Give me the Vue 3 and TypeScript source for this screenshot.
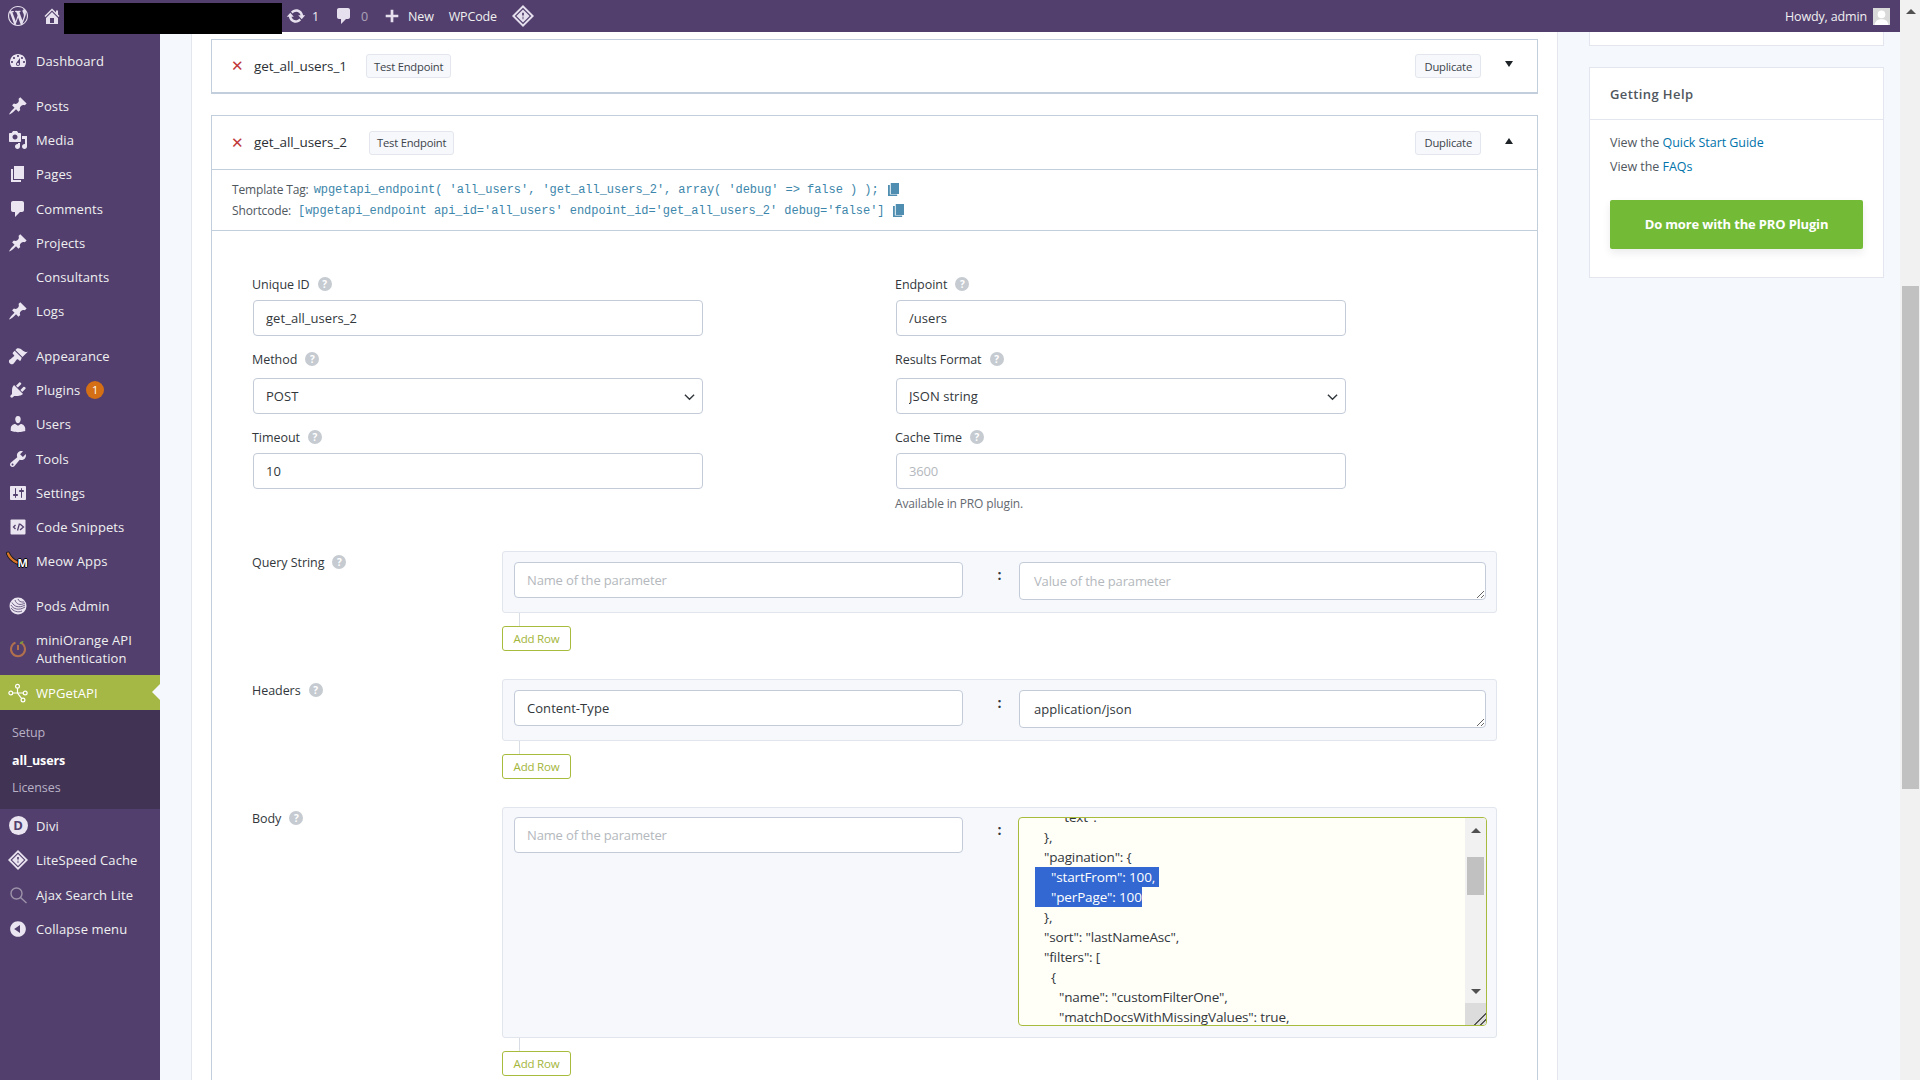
<template>
  <div class="page">
    <div class="window">
      <header class="adminbar">
        <svg class="bar-logo" viewBox="0 0 20 20"><path :d="icons.wp" /></svg>
        <svg class="bar-home" viewBox="0 0 20 20"><path :d="icons.home" /></svg>
        <div class="redacted"></div>
        <svg class="bar-update" viewBox="0 0 20 20"><path :d="icons.update" /></svg>
        <span class="count">1</span>
        <svg class="bar-comment" viewBox="0 0 20 20"><path :d="icons.comment" /></svg>
        <span class="count dim">0</span>
        <svg class="bar-plus" viewBox="0 0 20 20"><path d="M17 8.500v3h-5.500V17h-3v-5.500H3v-3h5.500V3h3v5.500z" /></svg>
        <span class="bar-new">New</span>
        <span class="bar-wpcode">WPCode</span>
        <svg class="bar-diamond" viewBox="0 0 20 20">
          <path d="M10 0l10 10-10 10L0 10z" />
          <path class="cut" d="M10 2.500l7.500 7.500-7.500 7.500L2.500 10z" />
          <path d="M10 4l6 6-6 6-6-6z" />
          <path class="cut" d="M9.200 7h1.600v2.500h-1.600zM9.600 10.500h.8v2.500h-.8z" />
        </svg>
        <span class="howdy">Howdy, admin</span>
        <span class="avatar">
          <svg viewBox="0 0 16 16"><circle cx="8" cy="6" r="3.600" /><path d="M1.500 16c.4-4 3-5.500 6.500-5.500s6.100 1.500 6.500 5.500z" /></svg>
        </span>
      </header>

      <div class="body-row">
        <nav class="sidebar">
          <template v-for="item in menu" :key="item.label">
            <div class="menu-item" :class="{ current: item.current, sep: item.sep, tall: item.tall }">
              <span class="menu-icon">
                <svg v-if="item.path" viewBox="0 0 20 20"><path :d="item.path" fill-rule="evenodd" /></svg>
                <svg v-else-if="item.kind === 'code'" viewBox="0 0 20 20">
                  <rect x="2.500" y="2.500" width="15" height="15" rx="1" />
                  <path class="dark-line" d="M7.500 8l-2 2 2 2M9.500 13.500l2-7M12 7l3.500 3-3.500 3" />
                </svg>
                <span v-else-if="item.kind === 'meow'" class="meow">
                  <svg viewBox="0 0 14 16">
                    <path class="tail-back" d="M2 2.500c1.500 4 4 6.500 9 9" />
                    <path class="tail" d="M2 2.500c1.500 4 4 6.500 9 9" />
                  </svg>
                  <b>M</b>
                </span>
                <svg v-else-if="item.kind === 'pods'" viewBox="0 0 20 20">
                  <circle cx="10" cy="10" r="8.500" />
                  <path class="dark-thin" d="M3 9c2 4 8 6 14 2M4 6.500c2 4 7 6 13 2.500M7 4c1 4 5 6 10 3M10 3c.5 2 3 3.500 6 3M3 12c2 3 7 5 11 3" />
                </svg>
                <svg v-else-if="item.kind === 'orange'" viewBox="0 0 20 20">
                  <path class="orange-ring" d="M12.500 3.600a7 7 0 1 1-5 0M10 6v5" />
                  <path class="orange-leaf" d="M11.500 5c.5-2 2-3 4-3-.2 2-1.800 3.300-4 3z" />
                </svg>
                <svg v-else-if="item.kind === 'nodes'" viewBox="0 0 20 20">
                  <g class="node-lines">
                    <circle cx="2.800" cy="10" r="1.900" /><circle cx="9.500" cy="3.300" r="1.900" />
                    <circle cx="17.200" cy="10" r="1.900" /><circle cx="15" cy="17" r="1.900" />
                    <path d="M4.700 10h10.600M9.500 5.200V10l4.200 5.600" />
                  </g>
                </svg>
                <span v-else-if="item.kind === 'divi'" class="divi">D</span>
                <svg v-else-if="item.kind === 'lite'" viewBox="0 0 20 20">
                  <path d="M10 0l10 10-10 10L0 10z" />
                  <path class="cut" d="M10 2.500l7.500 7.500-7.500 7.500L2.500 10z" />
                  <path d="M10 4l6 6-6 6-6-6z" />
                  <path class="cut" d="M9.200 7h1.600v2.500h-1.600zM9.600 10.500h.8v2.500h-.8z" />
                </svg>
                <svg v-else-if="item.kind === 'search'" viewBox="0 0 20 20">
                  <circle class="search-line" cx="8.500" cy="8.500" r="5.500" />
                  <path class="search-line" d="M12.500 12.500l6 5.500" />
                </svg>
              </span>
              <span class="menu-label">{{ item.label }}</span>
              <span v-if="item.badge" class="badge">{{ item.badge }}</span>
            </div>
            <div v-if="item.current" class="submenu">
              <div>Setup</div>
              <div class="active">all_users</div>
              <div>Licenses</div>
            </div>
          </template>
        </nav>

        <main class="content">
          <section class="panel">
            <div class="card closed">
              <div class="card-head">
                <span class="remove">✕</span>
                <span class="name">get_all_users_1</span>
                <button type="button" class="small-btn">Test Endpoint</button>
                <button type="button" class="small-btn dup">Duplicate</button>
                <span class="caret"></span>
              </div>
            </div>

            <div class="card">
              <div class="card-head open">
                <span class="remove">✕</span>
                <span class="name">get_all_users_2</span>
                <button type="button" class="small-btn">Test Endpoint</button>
                <button type="button" class="small-btn dup">Duplicate</button>
                <span class="caret up"></span>
              </div>

              <div class="info">
                <div class="info-line">
                  <span class="info-label">Template Tag:</span>
                  <code>wpgetapi_endpoint( 'all_users', 'get_all_users_2', array( 'debug' =&gt; false ) );</code>
                  <svg class="copy" viewBox="0 0 12 14"><path d="M3 0h9v12H3zM0 2h2v10.500h8V14H0z" /></svg>
                </div>
                <div class="info-line">
                  <span class="info-label">Shortcode:</span>
                  <code>[wpgetapi_endpoint api_id='all_users' endpoint_id='get_all_users_2' debug='false']</code>
                  <svg class="copy" viewBox="0 0 12 14"><path d="M3 0h9v12H3zM0 2h2v10.500h8V14H0z" /></svg>
                </div>
              </div>

              <div class="form">
                <div class="fields">
                  <div class="field">
                    <label>Unique ID <i class="help">?</i></label>
                    <input type="text" value="get_all_users_2" />
                  </div>
                  <div class="field">
                    <label>Endpoint <i class="help">?</i></label>
                    <input type="text" value="/users" />
                  </div>
                  <div class="field">
                    <label>Method <i class="help">?</i></label>
                    <div class="select-wrap">
                      <select><option>POST</option></select>
                      <svg viewBox="0 0 12 8"><path d="M1 1.500l5 5 5-5" /></svg>
                    </div>
                  </div>
                  <div class="field">
                    <label>Results Format <i class="help">?</i></label>
                    <div class="select-wrap">
                      <select><option>JSON string</option></select>
                      <svg viewBox="0 0 12 8"><path d="M1 1.500l5 5 5-5" /></svg>
                    </div>
                  </div>
                  <div class="field">
                    <label>Timeout <i class="help">?</i></label>
                    <input type="text" value="10" />
                  </div>
                  <div class="field">
                    <label>Cache Time <i class="help">?</i></label>
                    <input type="text" placeholder="3600" disabled />
                    <p class="hint">Available in PRO plugin.</p>
                  </div>
                </div>

                <div class="param">
                  <label>Query String <i class="help">?</i></label>
                  <div>
                    <div class="param-box">
                      <input type="text" placeholder="Name of the parameter" />
                      <b class="colon">:</b>
                      <textarea placeholder="Value of the parameter"></textarea>
                    </div>
                    <div class="stem"></div>
                    <button type="button" class="add-row">Add Row</button>
                  </div>
                </div>

                <div class="param">
                  <label>Headers <i class="help">?</i></label>
                  <div>
                    <div class="param-box">
                      <input type="text" value="Content-Type" />
                      <b class="colon">:</b>
                      <textarea>application/json</textarea>
                    </div>
                    <div class="stem"></div>
                    <button type="button" class="add-row">Add Row</button>
                  </div>
                </div>

                <div class="param">
                  <label>Body <i class="help">?</i></label>
                  <div>
                    <div class="param-box body-box">
                      <input type="text" placeholder="Name of the parameter" />
                      <b class="colon">:</b>
                      <div class="json">
                        <div class="json-text">
                          <div
                            v-for="(line, i) in jsonLines"
                            :key="i"
                            class="json-line"
                            :class="line.cls"
                          >
                            <span>{{ line.text }}</span>
                          </div>
                        </div>
                        <div class="json-scroll">
                          <span class="arrow up"></span>
                          <span class="thumb"></span>
                          <span class="arrow down"></span>
                          <span class="grip"></span>
                        </div>
                      </div>
                    </div>
                    <div class="stem"></div>
                    <button type="button" class="add-row">Add Row</button>
                  </div>
                </div>
              </div>
            </div>
          </section>

          <aside class="side">
            <div class="side-stub"></div>
            <div class="side-box">
              <h3>Getting Help</h3>
              <div class="side-body">
                <p>View the <a href="#">Quick Start Guide</a></p>
                <p>View the <a href="#">FAQs</a></p>
                <a href="#" class="pro-btn">Do more with the PRO Plugin</a>
              </div>
            </div>
          </aside>
        </main>
      </div>
    </div>

    <div class="page-scroll">
      <span class="arrow up"></span>
      <span class="page-thumb"></span>
    </div>
  </div>
</template>

<script setup lang="ts">
interface MenuItem {
  label: string
  path?: string
  kind?: string
  sep?: boolean
  tall?: boolean
  current?: boolean
  badge?: string
}

const pin =
  'M10.44 3.02l1.82-1.82 6.36 6.35-1.83 1.82c-1.05-.68-2.48-.57-3.41.36l-.75.75c-.92.93-1.04 2.35-.35 3.41l-1.83 1.82-2.41-2.41-2.8 2.79c-.42.42-3.38 2.71-3.8 2.29s1.86-3.39 2.28-3.81l2.79-2.79L4.1 9.36l1.83-1.82c1.05.69 2.48.57 3.4-.36l.75-.75c.93-.92 1.05-2.35.36-3.41z'

const icons = {
  wp: 'M20 10c0-5.51-4.49-10-10-10C4.48 0 0 4.49 0 10c0 5.52 4.48 10 10 10 5.51 0 10-4.48 10-10zM7.78 15.37L4.37 6.22c.55-.02 1.17-.08 1.17-.08.5-.06.44-1.13-.06-1.11 0 0-1.45.11-2.37.11-.18 0-.37 0-.58-.01C4.12 2.69 6.87 1.11 10 1.11c2.33 0 4.45.87 6.05 2.34-.68-.11-1.65.39-1.65 1.58 0 .74.45 1.36.9 2.1.35.61.55 1.36.55 2.46 0 1.49-1.4 5-1.4 5l-3.03-8.37c.54-.02.82-.17.82-.17.5-.05.44-1.25-.06-1.22 0 0-1.44.12-2.38.12-.87 0-2.33-.12-2.33-.12-.5-.03-.56 1.2-.06 1.22l.92.08 1.26 3.41zM17.41 10c.24-.64.74-1.87.43-4.25.7 1.29 1.05 2.71 1.05 4.25 0 3.29-1.73 6.24-4.4 7.78.97-2.59 1.94-5.2 2.92-7.78zM6.1 18.09C3.12 16.65 1.11 13.53 1.11 10c0-1.3.23-2.48.72-3.59C3.25 10.3 4.67 14.2 6.1 18.09zm4.03-6.63l2.58 6.98c-.86.29-1.76.45-2.71.45-.79 0-1.57-.11-2.29-.33.81-2.38 1.62-4.74 2.42-7.1z',
  home: 'M16 8.500l1.530 1.530-1.060 1.060L10 4.620l-6.470 6.470-1.060-1.060L10 2.500l4 4v-2h2v4zm-6-2.460l6 5.990V18H4v-5.970zM12 17v-5H8v5h4z',
  update:
    'M10.200 3.280c3.530 0 6.430 2.610 6.920 6h2.080l-3.500 4-3.500-4h2.320c-.45-1.970-2.210-3.450-4.320-3.450-1.450 0-2.730.71-3.540 1.780L4.950 5.660C6.230 4.200 8.110 3.280 10.200 3.280zm-.4 13.440c-3.520 0-6.430-2.610-6.920-6H.8l3.500-4c1.170 1.330 2.330 2.670 3.500 4H5.480c.45 1.970 2.210 3.450 4.320 3.450 1.450 0 2.730-.71 3.540-1.780l1.710 1.950c-1.280 1.460-3.150 2.380-5.250 2.380z',
  comment: 'M5 2h9c1.100 0 2 .9 2 2v7c0 1.100-.9 2-2 2h-2l-5 5v-5H5c-1.100 0-2-.9-2-2V4c0-1.100.9-2 2-2z',
}

const menu: MenuItem[] = [
  {
    label: 'Dashboard',
    path: 'M3.760 16h12.480c1.100-1.370 1.760-3.110 1.760-5 0-4.420-3.580-8-8-8s-8 3.580-8 8c0 1.890.66 3.630 1.760 5zM10 4c.55 0 1 .45 1 1s-.45 1-1 1-1-.45-1-1 .45-1 1-1zM6 6c.55 0 1 .45 1 1s-.45 1-1 1-1-.45-1-1 .45-1 1-1zm8 0c.55 0 1 .45 1 1s-.45 1-1 1-1-.45-1-1 .45-1 1-1zm-5.370 5.550L12 7v6c0 1.100-.9 2-2 2s-2-.9-2-2c0-.57.24-1.080.63-1.450zM4 10c.55 0 1 .45 1 1s-.45 1-1 1-1-.45-1-1 .45-1 1-1zm12 0c.55 0 1 .45 1 1s-.45 1-1 1-1-.45-1-1 .45-1 1-1zm-5 3c0-.55-.45-1-1-1s-1 .45-1 1 .45 1 1 1 1-.45 1-1z',
  },
  { label: 'Posts', path: pin, sep: true },
  {
    label: 'Media',
    path: 'M13 11V4c0-.55-.45-1-1-1h-1.670L9 1H5L3.670 3H2c-.55 0-1 .45-1 1v7c0 .55.45 1 1 1h10c.55 0 1-.45 1-1zM7 4.500c1.380 0 2.500 1.120 2.500 2.500S8.380 9.500 7 9.500 4.500 8.380 4.500 7 5.620 4.500 7 4.500zM14 6h5v10.500c0 1.380-1.120 2.500-2.500 2.500S14 17.880 14 16.500s1.120-2.500 2.500-2.500c.17 0 .34.02.5.05V9h-3V6zm-4 8.050V13h2v3.500c0 1.380-1.120 2.500-2.500 2.500S7 17.880 7 16.500 8.120 14 9.500 14c.17 0 .34.02.5.05z',
  },
  { label: 'Pages', path: 'M6 15V2h10v13H6zm-1 1h8v2H3V5h2v11z' },
  { label: 'Comments', path: icons.comment },
  { label: 'Projects', path: pin },
  { label: 'Consultants', kind: 'none' },
  { label: 'Logs', path: pin },
  {
    label: 'Appearance',
    sep: true,
    path: 'M14.480 11.060L7.410 3.990l1.500-1.500c.5-.56 2.300-.47 3.510.32 1.210.8 1.430 1.280 2.910 2.100 1.180.64 2.450 1.260 4.450.85zm-.71.71L6.700 4.700 4.930 6.470c-.39.39-.39 1.020 0 1.410l1.060 1.060c.39.39.39 1.030 0 1.420-.6.6-1.430 1.110-2.210 1.690-.35.26-.7.53-1.010.84C1.430 13.230.76 14.370 1 16.100c.14.97 1.060 1.890 2.030 2.030 1.730.24 2.870-.43 3.230-1.470.31-.31.58-.66.84-1.010.58-.78 1.090-1.610 1.690-2.210.39-.39 1.030-.39 1.420 0l1.060 1.060c.39.39 1.020.39 1.410 0z',
  },
  {
    label: 'Plugins',
    badge: '1',
    path: 'M13.110 4.360L9.870 7.600 8 5.730l3.240-3.240c.35-.34 1.050-.2 1.560.32.52.51.66 1.210.31 1.550zm-8 1.770l.91-1.120 9.010 9.010-1.190.84c-.71.71-2.630 1.160-3.820 1.160H6.140L4.900 17.260c-.59.59-1.540.59-2.120 0-.59-.58-.59-1.530 0-2.120l1.240-1.240v-3.880c0-1.130.4-3.190 1.090-3.890zm7.260 3.970l3.240-3.240c.34-.35 1.040-.21 1.550.31.52.51.66 1.210.31 1.550l-3.240 3.250z',
  },
  {
    label: 'Users',
    path: 'M10 9.250c-2.270 0-2.730-3.440-2.730-3.440C7 4.020 7.820 2 9.970 2c2.160 0 2.980 2.020 2.710 3.810 0 0-.41 3.440-2.680 3.440zm0 2.570L12.720 10c2.390 0 4.520 2.330 4.520 4.530v2.490s-3.650 1.130-7.240 1.130c-3.650 0-7.240-1.130-7.240-1.130v-2.490c0-2.250 1.940-4.480 4.470-4.480z',
  },
  {
    label: 'Tools',
    path: 'M16.680 9.770c-1.340 1.340-3.300 1.670-4.950.99l-5.410 6.520c-.99.99-2.590.99-3.580 0s-.99-2.590 0-3.570l6.520-5.420c-.68-1.650-.35-3.610.99-4.950 1.280-1.280 3.120-1.620 4.720-1.060l-2.890 2.890 2.820 2.820 2.860-2.870c.53 1.580.18 3.390-1.080 4.650zM3.810 16.210c.4.39 1.040.39 1.430 0 .4-.4.4-1.040 0-1.430-.39-.4-1.030-.4-1.430 0-.39.39-.39 1.030 0 1.430z',
  },
  {
    label: 'Settings',
    path: 'M18 16V4c0-.55-.45-1-1-1H3c-.55 0-1 .45-1 1v12c0 .55.45 1 1 1h14c.55 0 1-.45 1-1zM8 11h1c.55 0 1 .45 1 1s-.45 1-1 1H8v1.500c0 .28-.22.5-.5.5s-.5-.22-.5-.5V13H6c-.55 0-1-.45-1-1s.45-1 1-1h1V5.500c0-.28.22-.5.5-.5s.5.22.5.5V11zm5-2h-1c-.55 0-1-.45-1-1s.45-1 1-1h1V5.500c0-.28.22-.5.5-.5s.5.22.5.5V7h1c.55 0 1 .45 1 1s-.45 1-1 1h-1v5.500c0 .28-.22.5-.5.5s-.5-.22-.5-.5V9z',
  },
  { label: 'Code Snippets', kind: 'code' },
  { label: 'Meow Apps', kind: 'meow' },
  { label: 'Pods Admin', kind: 'pods', sep: true },
  { label: 'miniOrange API Authentication', kind: 'orange', tall: true },
  { label: 'WPGetAPI', kind: 'nodes', current: true },
  { label: 'Divi', kind: 'divi' },
  { label: 'LiteSpeed Cache', kind: 'lite' },
  { label: 'Ajax Search Lite', kind: 'search' },
  {
    label: 'Collapse menu',
    path: 'M10 2.160c4.330 0 7.840 3.510 7.840 7.840s-3.510 7.840-7.840 7.840S2.160 14.330 2.160 10 5.710 2.160 10 2.160zm2 11.720V6.120L6.180 9.970z',
  },
]

const jsonLines = [
  { text: '"text":', cls: 'i3' },
  { text: '},', cls: 'i1' },
  { text: '"pagination": {', cls: 'i1' },
  { text: '"startFrom": 100,', cls: 'sel first' },
  { text: '"perPage": 100', cls: 'sel' },
  { text: '},', cls: 'i1' },
  { text: '"sort": "lastNameAsc",', cls: 'i1' },
  { text: '"filters": [', cls: 'i1' },
  { text: '{', cls: 'i2' },
  { text: '"name": "customFilterOne",', cls: 'i3' },
  { text: '"matchDocsWithMissingValues": true,', cls: 'i3' },
]
</script>

<style>
html,
body {
  margin: 0;
  overflow: hidden;
}
</style>

<style scoped>
.page {
  display: flex;
  width: 1920px;
  height: 1080px;
  overflow: hidden;
  font-family: "Open Sans", "Noto Sans", sans-serif;
  font-size: 12.5px;
  letter-spacing: -0.15px;
  color: #32373c;
  background: #f5f8fc;
}
.window {
  display: flex;
  flex-direction: column;
  width: 1900px;
  flex: none;
}
.page-scroll {
  flex: 1;
  display: flex;
  flex-direction: column;
  align-items: center;
  background: #f1f1f1;
  padding: 9px 2px 0;
}
.page-thumb {
  width: 17px;
  height: 503px;
  margin-top: 272px;
  background: #c1c1c1;
}
.arrow {
  display: block;
  width: 0;
  height: 0;
  border-left: 5px solid transparent;
  border-right: 5px solid transparent;
}
.arrow.up {
  border-bottom: 5px solid #505050;
}
.arrow.down {
  border-top: 5px solid #505050;
}

/* top bar */
.adminbar {
  position: relative;
  z-index: 2;
  display: flex;
  align-items: center;
  flex: none;
  height: 32px;
  background: #523f6d;
  color: #f0f0f1;
  font-size: 12.5px;
}
.adminbar svg {
  flex: none;
  fill: #e6e0ee;
}
.bar-logo {
  width: 20px;
  height: 20px;
  margin-left: 8px;
}
.bar-home {
  width: 20px;
  height: 20px;
  margin-left: 14px;
}
.redacted {
  flex: none;
  align-self: flex-start;
  width: 218px;
  height: 31px;
  margin: 3px 0 0 2px;
  background: #000;
}
.bar-update {
  width: 20px;
  height: 20px;
  margin-left: 4px;
}
.count {
  margin-left: 6px;
  width: 9px;
}
.count.dim {
  opacity: 0.55;
}
.bar-comment {
  width: 20px;
  height: 20px;
  margin-left: 13px;
}
.bar-comment + .count {
  margin-left: 7px;
}
.bar-plus {
  width: 18px;
  height: 18px;
  margin-left: 13px;
}
.bar-new {
  margin-left: 7px;
}
.bar-wpcode {
  margin-left: 15px;
}
.bar-diamond {
  width: 22px;
  height: 22px;
  margin-left: 15px;
}
.adminbar .cut {
  fill: #523f6d;
}
.howdy {
  margin-left: auto;
}
.avatar {
  display: flex;
  width: 17px;
  height: 17px;
  margin: 0 10px 0 6px;
  background: #d9d9d9;
}
.adminbar .avatar svg {
  width: 100%;
  height: 100%;
  fill: #fff;
}

.body-row {
  display: flex;
  flex: 1;
  min-height: 0;
}

/* left menu */
.sidebar {
  flex: none;
  width: 160px;
  padding-top: 12px;
  background: #523f6d;
  color: #f0f0f1;
  font-size: 13px;
  letter-spacing: 0.1px;
}
.menu-item {
  position: relative;
  display: flex;
  align-items: center;
  height: 34.200px;
}
.menu-item.sep {
  margin-top: 10.700px;
}
.menu-item.tall {
  height: 52px;
  line-height: 18px;
}
.menu-item.current {
  height: 35px;
  background: #a5b745;
  color: #fff;
}
.menu-item.current::after {
  content: "";
  position: absolute;
  right: 0;
  top: 9px;
  border: 8px solid transparent;
  border-right-color: #f5f8fc;
  border-left-width: 0;
}
.menu-icon {
  display: flex;
  justify-content: center;
  flex: none;
  width: 20px;
  height: 20px;
  margin: 0 8px;
}
.menu-icon svg {
  width: 20px;
  height: 20px;
  fill: #eae5f1;
}
.menu-icon .cut {
  fill: #523f6d;
}
.dark-line {
  fill: none;
  stroke: #523f6d;
  stroke-width: 1.300;
}
.dark-thin {
  fill: none;
  stroke: #523f6d;
  stroke-width: 0.8;
}
.orange-ring {
  fill: none;
  stroke: #b0704e;
  stroke-width: 2;
}
.menu-icon .orange-leaf {
  fill: #7d9a3b;
}
.menu-icon .node-lines {
  fill: none;
  stroke: #fff;
  stroke-width: 1.200;
}
.menu-icon .search-line {
  fill: none;
  stroke: #9c93aa;
  stroke-width: 1.400;
}
.meow {
  position: relative;
  display: block;
  width: 20px;
  height: 20px;
}
.menu-icon .meow svg {
  position: absolute;
  left: -2px;
  top: 0;
  width: 14px;
  height: 16px;
}
.tail-back {
  fill: none;
  stroke: #1a1a1a;
  stroke-width: 4;
  stroke-linecap: round;
}
.tail {
  fill: none;
  stroke: #d9762a;
  stroke-width: 2.200;
  stroke-linecap: round;
}
.meow b {
  position: absolute;
  right: 0;
  top: 5px;
  font-size: 11px;
  line-height: 14px;
  color: #fff;
  text-shadow: 1px 0 #000, -1px 0 #000, 0 1px #000, 0 -1px #000;
}
.divi {
  display: block;
  width: 19px;
  height: 19px;
  border-radius: 50%;
  background: #eae5f1;
  color: #523f6d;
  font-weight: 700;
  font-size: 13px;
  line-height: 19px;
  text-align: center;
}
.badge {
  width: 18px;
  height: 18px;
  margin-left: 6px;
  border-radius: 50%;
  background: #d46f15;
  color: #fff;
  font-size: 11px;
  line-height: 18px;
  text-align: center;
}
.submenu {
  height: 99px;
  padding: 9px 12px 0;
  box-sizing: border-box;
  background: #413354;
  color: #b9b1c6;
  font-size: 12.500px;
  letter-spacing: -0.1px;
  line-height: 27.500px;
}
.submenu .active {
  color: #fff;
  font-weight: 700;
}

/* content */
.content {
  display: flex;
  flex: 1;
  min-width: 0;
  padding-left: 31px;
  overflow: hidden;
}
.panel {
  flex: none;
  width: 1367px;
  box-sizing: border-box;
  padding: 7px 19px 0 19px;
  background: #fff;
  border-left: 1px solid #e3e6ec;
  border-right: 1px solid #e3e6ec;
}
.card {
  border: 1px solid #c3cedd;
  margin-bottom: 21px;
}
.card.closed {
  height: 55px;
  box-sizing: border-box;
  border-bottom-width: 2px;
}
.card-head {
  display: flex;
  align-items: center;
  height: 52px;
  padding-left: 20px;
}
.card-head.open {
  height: 53px;
  border-bottom: 1px solid #c3cedd;
}
.remove {
  width: 22px;
  color: #c0393b;
  font-size: 15px;
  font-weight: 700;
  font-family: "DejaVu Sans", sans-serif;
  margin-left: -1px;
  margin-right: 1px;
}
.name {
  width: 112px;
  font-size: 13.500px;
  letter-spacing: -0.05px;
  color: #2c3035;
}
.card-head.open .name {
  width: 115px;
  margin-top: -2px;
}
.small-btn {
  height: 24px;
  padding: 0 7px;
  border: 1px solid #e3e6ec;
  border-radius: 3px;
  background: #f6f8fc;
  color: #3c434a;
  font: inherit;
  font-size: 11.200px;
  letter-spacing: -0.2px;
}
.small-btn.dup {
  margin-left: auto;
  padding: 0 8px;
}
.caret {
  width: 0;
  height: 0;
  margin: 0 24px 4px 24px;
  border-left: 4px solid transparent;
  border-right: 4px solid transparent;
  border-top: 6px solid #1d2327;
}
.caret.up {
  border-top: 0;
  border-bottom: 6px solid #1d2327;
}
.info {
  height: 61px;
  box-sizing: border-box;
  padding: 9px 20px 0;
  border-bottom: 1px solid #c3cedd;
  font-size: 12px;
  color: #50575e;
}
.info-line {
  display: flex;
  align-items: center;
  height: 21px;
}
.info-label {
  margin-right: 5px;
}
.info-line:last-child .info-label {
  margin-right: 7px;
}
code {
  font-family: "Liberation Mono", monospace;
  font-size: 12px;
  letter-spacing: -0.05px;
  color: #3d86ab;
}
.copy {
  width: 11px;
  height: 13px;
  margin-left: 9px;
  fill: #4f8eb0;
}

/* form */
.form {
  padding: 44px 41px 60px 40px;
}
.fields {
  display: grid;
  grid-template-columns: 643px 1fr;
  row-gap: 14px;
}
.field {
  display: flex;
  flex-direction: column;
  gap: 5px;
  align-items: flex-start;
}
.field label {
  margin: -1px 0 1px;
}
label {
  display: flex;
  align-items: center;
  gap: 7px;
  height: 20px;
  font-size: 12.500px;
  letter-spacing: -0.05px;
  color: #32373c;
}
.help {
  width: 14px;
  height: 14px;
  margin-left: 1px;
  border-radius: 50%;
  background: #c6cbd1;
  color: #fff;
  font: 700 10px/14px "Open Sans", sans-serif;
  text-align: center;
}
input,
select,
textarea {
  box-sizing: border-box;
  margin: 0 1px;
  padding: 0 12px;
  background: #fff;
  border: 1px solid #c3cad8;
  border-radius: 4px;
  color: #32373c;
  font: inherit;
  font-size: 13px;
  letter-spacing: 0.05px;
  outline: none;
}
.fields input,
.fields select {
  width: 450px;
  height: 36px;
}
input::placeholder,
textarea::placeholder {
  color: #b4b8bd;
  letter-spacing: -0.15px;
}
input:disabled {
  background: #fff;
}
.select-wrap {
  position: relative;
  margin-top: 3px;
  height: 36px;
}
select {
  appearance: none;
  display: block;
}
.select-wrap svg {
  position: absolute;
  right: 9px;
  top: 15px;
  width: 11px;
  height: 8px;
  fill: none;
  stroke: #32373c;
  stroke-width: 1.500;
}
.hint {
  margin: 2px 0 0;
  font-size: 12px;
  line-height: 16px;
  color: #646970;
}
.param {
  display: grid;
  grid-template-columns: 250px 995px;
  margin-top: 28px;
}
.fields + .param {
  margin-top: 39px;
}
.param > label {
  margin-top: 1px;
}
.param-box {
  display: flex;
  box-sizing: border-box;
  height: 62px;
  padding: 10px 10px 0 11px;
  background: #f6f8fc;
  border: 1px solid #e1e5ec;
  border-radius: 3px;
}
.param-box input {
  flex: none;
  width: 449px;
  height: 36px;
  margin: 0;
}
.colon {
  flex: none;
  width: 56px;
  box-sizing: border-box;
  padding-left: 17px;
  margin-top: 4px;
  font-size: 14px;
  line-height: 18px;
  text-align: center;
}
.param-box textarea {
  flex: none;
  width: 467px;
  height: 38px;
  margin: 0;
  padding: 8px 14px;
  line-height: 20px;
}
.stem {
  width: 1px;
  height: 13px;
  margin-left: 17px;
  background: #d8dce3;
}
.add-row {
  display: block;
  width: 69px;
  height: 25px;
  padding: 0;
  background: #fff;
  border: 1px solid #a9bb3d;
  border-radius: 3px;
  color: #a3b53a;
  font: inherit;
  font-size: 11.500px;
  letter-spacing: -0.2px;
}
.body-box {
  height: 231px;
  padding-top: 9px;
}
.json {
  position: relative;
  flex: none;
  box-sizing: border-box;
  width: 469px;
  height: 209px;
  margin-left: -1px;
  overflow: hidden;
  background: #fffef7;
  border: 1px solid #a9bb3d;
  border-radius: 4px;
  font-size: 13.500px;
  line-height: 20px;
  color: #32373c;
}
.json-text {
  margin-top: -11px;
  padding-left: 16px;
}
.json-line {
  height: 20px;
  white-space: nowrap;
}
.i1 {
  padding-left: 9px;
}
.i2 {
  padding-left: 16px;
}
.i3 {
  padding-left: 24px;
}
.sel span {
  display: inline-block;
  padding-left: 16px;
  background: #3367d1;
  color: #fff;
}
.sel.first span {
  padding-right: 4px;
}
.json-scroll {
  position: absolute;
  top: 0;
  right: 0;
  bottom: 0;
  display: flex;
  flex-direction: column;
  align-items: center;
  width: 21px;
  padding-top: 10px;
  box-sizing: border-box;
  background: #f1f1f1;
}
.thumb {
  width: 17px;
  height: 38px;
  margin-top: 24px;
  background: #c1c1c1;
}
.json-scroll .down {
  margin-top: 94px;
}
.grip {
  position: absolute;
  left: 0;
  right: 0;
  bottom: 0;
  height: 22px;
  background:
    linear-gradient(135deg, transparent 70%, #555 70%, #555 75%, transparent 75%, transparent 85%, #555 85%, #555 90%, transparent 90%),
    #dcdcdc;
}

/* right column */
.side {
  flex: none;
  width: 295px;
  margin-left: 31px;
}
.side-stub {
  height: 13px;
  background: #fff;
  border: 1px solid #e3e6ee;
  border-top: 0;
}
.side-box {
  box-sizing: border-box;
  height: 211px;
  margin-top: 21px;
  background: #fff;
  border: 1px solid #e3e6ee;
}
h3 {
  height: 51px;
  margin: 0;
  padding: 0 20px;
  border-bottom: 1px solid #e3e6ee;
  font-size: 13px;
  font-weight: 600;
  line-height: 53px;
  letter-spacing: 0.4px;
  color: #50575e;
}
.side-body {
  padding: 11px 20px 0;
  font-size: 12.500px;
  letter-spacing: -0.05px;
  color: #50575e;
}
.side-body p {
  margin: 0;
  line-height: 24px;
}
.side-body a {
  color: #0073aa;
  text-decoration: none;
}
.side-body .pro-btn {
  display: block;
  width: 253px;
  height: 49px;
  margin-top: 21px;
  border-radius: 2px;
  background: #73bb36;
  box-shadow: 0 4px 8px rgba(0, 0, 0, 0.08);
  color: #fff;
  font-size: 13px;
  font-weight: 700;
  letter-spacing: -0.15px;
  line-height: 49px;
  text-align: center;
}
</style>
